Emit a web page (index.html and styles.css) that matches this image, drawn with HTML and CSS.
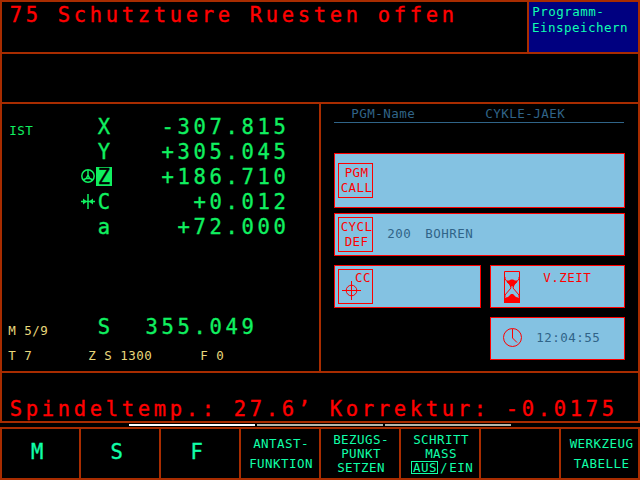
FILE: index.html
```
<!DOCTYPE html>
<html lang="de">
<head>
<meta charset="utf-8">
<title>Programm-Einspeichern</title>
<link rel="stylesheet" href="styles.css">
</head>
<body>
<main class="screen">
  <section class="frame">
    <header class="top">
      <div class="message large">75 Schutztuere Ruesten offen</div>
      <div class="mode small">Programm-<br>Einspeichern</div>
    </header>
    <div class="blank"></div>
    <div class="work">
      <section class="position">
        <div class="axes">
          <span class="actual small">IST</span><span></span><b class="large">X</b><span class="value large">-307.815</span>
          <span></span><span></span><b class="large">Y</b><span class="value large">+305.045</span>
          <span></span>
          <svg class="axis-icon" width="16" height="20" viewBox="0 0 16 20"><circle cx="8" cy="9" r="6.2"/><path d="M8 3v5M8 8l-2 4M8 8l2 4M3 13l3-1.5h4l3 1.5"/></svg>
          <b class="large selected">Z</b><span class="value large">+186.710</span>
          <span></span>
          <svg class="axis-icon" width="16" height="20" viewBox="0 0 16 20"><path d="M8 2v15M1 9.500h14"/><path class="solid" d="M3 6.500L7 9.500L3 12.500zM13 6.500L9 9.500L13 12.500z"/></svg>
          <b class="large">C</b><span class="value large">+0.012</span>
          <span></span><span></span><b class="large">a</b><span class="value large">+72.000</span>
        </div>
        <div class="spindle"><span class="small">M 5/9</span><b class="large">S</b><span class="value large">355.049</span></div>
        <div class="tool small"><span>T 7</span><span>Z S 1300</span><span>F 0</span></div>
      </section>
      <section class="status">
        <div class="program small"><span>PGM-Name</span><span>CYKLE-JAEK</span></div>
        <div class="card call"><div class="tag small"><span>PGM</span><span>CALL</span></div></div>
        <div class="card cycle"><div class="tag small"><span>CYCL</span><span>DEF</span></div><div class="cycle-name small"><span>200</span><span>BOHREN</span></div></div>
        <div class="pair">
          <div class="card center"><div class="tag pole small"><span>CC</span>
            <svg width="20" height="20" viewBox="0 0 20 20"><circle cx="9.500" cy="9.500" r="5.3"/><path d="M0 9.500h19M9.500 0v19"/></svg></div></div>
          <div class="card dwell">
            <svg class="glass" width="16" height="32" viewBox="0 0 16 32"><path d="M.5 .5h15v31h-15zM1 6v2l5 6 1 3-6 7v2M15 6v2l-5 6-1 3 6 7v2"/><path class="solid" d="M3 9.500h2l2-1h2l2 1h2v2l-3 2v2H6v-2l-3-2zM0 32v-5l4-1 3-3h2l3 3 4 1v5z"/></svg>
            <span class="small">V.ZEIT</span>
          </div>
        </div>
        <div class="card clock">
          <svg width="20" height="20" viewBox="0 0 20 20"><circle cx="9.500" cy="9.500" r="9"/><path d="M9.500 1v9l4.500 4.500"/></svg>
          <span class="small">12:04:55</span>
        </div>
      </section>
    </div>
    <footer class="message temperature large">Spindeltemp.: 27.6’ Korrektur: -0.0175</footer>
  </section>
  <div class="pages"><i class="current"></i><i></i><i></i></div>
  <nav class="keys">
    <div class="key large">M</div>
    <div class="key large">S</div>
    <div class="key large">F</div>
    <div class="key two small"><span>ANTAST-</span><span>FUNKTION</span></div>
    <div class="key three small"><span>BEZUGS-</span><span>PUNKT</span><span>SETZEN</span></div>
    <div class="key three small step"><span>SCHRITT</span><span>MASS</span><span class="toggle"><em>AUS</em><span class="slash">/</span><span>EIN</span></span></div>
    <div class="key"></div>
    <div class="key two last small"><span>WERKZEUG</span><span>TABELLE</span></div>
  </nav>
</main>
</body>
</html>
```
FILE: styles.css
```
* { box-sizing: border-box; }
body { margin: 0; background: #000; }
b, em { font-weight: normal; font-style: normal; }
svg { display: block; fill: none; stroke: currentColor; stroke-width: 1; }
.solid { fill: currentColor; stroke: none; }
.screen {
  --line: #a82c00;
  width: 640px;
  height: 480px;
  overflow: hidden;
  background: #000;
  font-family: "DejaVu Sans Mono", "Liberation Mono", monospace;
}
.large, .small { white-space: pre; }
.large { font-size: 20.5px; line-height: 20px; letter-spacing: 3.658px; text-indent: 1.8px; -webkit-text-stroke: .35px currentColor; }
.small { font-size: 12.5px; line-height: 16px; letter-spacing: .474px; text-indent: .25px; }

.frame { height: 423px; border: 2px solid var(--line); display: grid; grid-template-rows: 52px 50px 269px 48px; }
.top { display: grid; grid-template-columns: 527px 109px; border-bottom: 2px solid var(--line); }
.message { padding: 3px 0 0 6px; color: #f00; }
.top .message { border-right: 2px solid var(--line); }
.mode { padding: 2px 0 0 3px; background: #000080; color: #10ffb0; }
.blank { border-bottom: 2px solid var(--line); }
.work { display: grid; grid-template-columns: 319px 317px; border-bottom: 2px solid var(--line); }
.temperature { padding-top: 26px; }

.position { display: flex; flex-direction: column; border-right: 2px solid var(--line); color: #10f060; }
.axes { display: grid; grid-template-columns: 72px 16px 16px 176px; grid-auto-rows: 25px; margin: 13px 0 0 6px; }
.actual { padding: 6px 0 0 1px; }
.axis-icon { stroke-width: 1.5; }
.value { text-align: right; margin-right: -1.5px; }
.selected { height: 19px; background: #10f060; color: #000; }
.spindle { display: grid; grid-template-columns: 88px 16px 144px; margin: 75px 0 0 6px; }
.spindle .small { padding-top: 6px; }
.spindle .small, .tool { color: #e8d87c; }
.tool { display: grid; grid-template-columns: 80px 112px 60px; margin: 9px 0 0 6px; }

.status { padding-left: 13px; color: #f00; }
.program { display: grid; grid-template-columns: 134px 1fr; width: 290px; height: 19px; padding: 2px 0 0 17px; border-bottom: 1px solid #306488; color: #306488; }
.card { display: flex; align-items: flex-start; width: 291px; height: 43px; padding: 3px; background: #84c2e2; border: 1px solid #f00; }
.call { height: 55px; margin-top: 30px; padding-top: 9px; }
.cycle { margin-top: 5px; }
.tag { width: 35px; height: 35px; flex: none; border: 1px solid #f00; padding: 1px 0 0; line-height: 15px; display: flex; flex-direction: column; align-items: center; }
.tag span { margin-right: -2px; }
.cycle-name { display: grid; grid-template-columns: 38px 50px; margin: 9px 0 0 14px; color: #306488; }
.pair { display: flex; gap: 9px; margin-top: 9px; }
.center { width: 147px; }
.pole { padding-top: 0; align-items: flex-end; }
.pole span { margin-right: 1px; }
.pole svg { margin: -4px 10px 0 0; }
.dwell { width: 135px; }
.glass { margin: 2px 0 0 10px; }
.dwell span { margin: 1px 0 0 23px; }
.clock { width: 135px; margin: 9px 0 0 156px; }
.clock svg { margin: 7px 0 0 9px; }
.clock span { margin: 9px 0 0 13px; color: #306488; }

.pages { display: flex; gap: 2px; height: 4px; padding: 1px 0 1px 129px; }
.pages i { width: 126px; background: #b8b8ac; }
.pages .current { background: #fff; }

.keys { display: grid; grid-template-columns: 79px repeat(6, 80px) 77px; height: 53px; border: 2px solid var(--line); color: #10ffa8; }
.key { display: flex; flex-direction: column; align-items: center; border-right: 2px solid var(--line); }
.key:last-child { border-right: 0; }
.key.large { padding: 13px 5px 0 0; }
.two { padding-top: 5px; line-height: 20px; }
.two:not(.last) { padding-left: 2px; }
.two.last { padding-left: 4px; }
.three { padding-top: 4px; line-height: 14px; }
.key.three { padding-left: 2px; }
.toggle { display: flex; margin-left: 2px; }
.toggle em { width: 27px; height: 13px; padding-left: 1px; border: 1px solid currentColor; line-height: 11px; }
.slash { margin: 0 1px 0 2px; }
```
